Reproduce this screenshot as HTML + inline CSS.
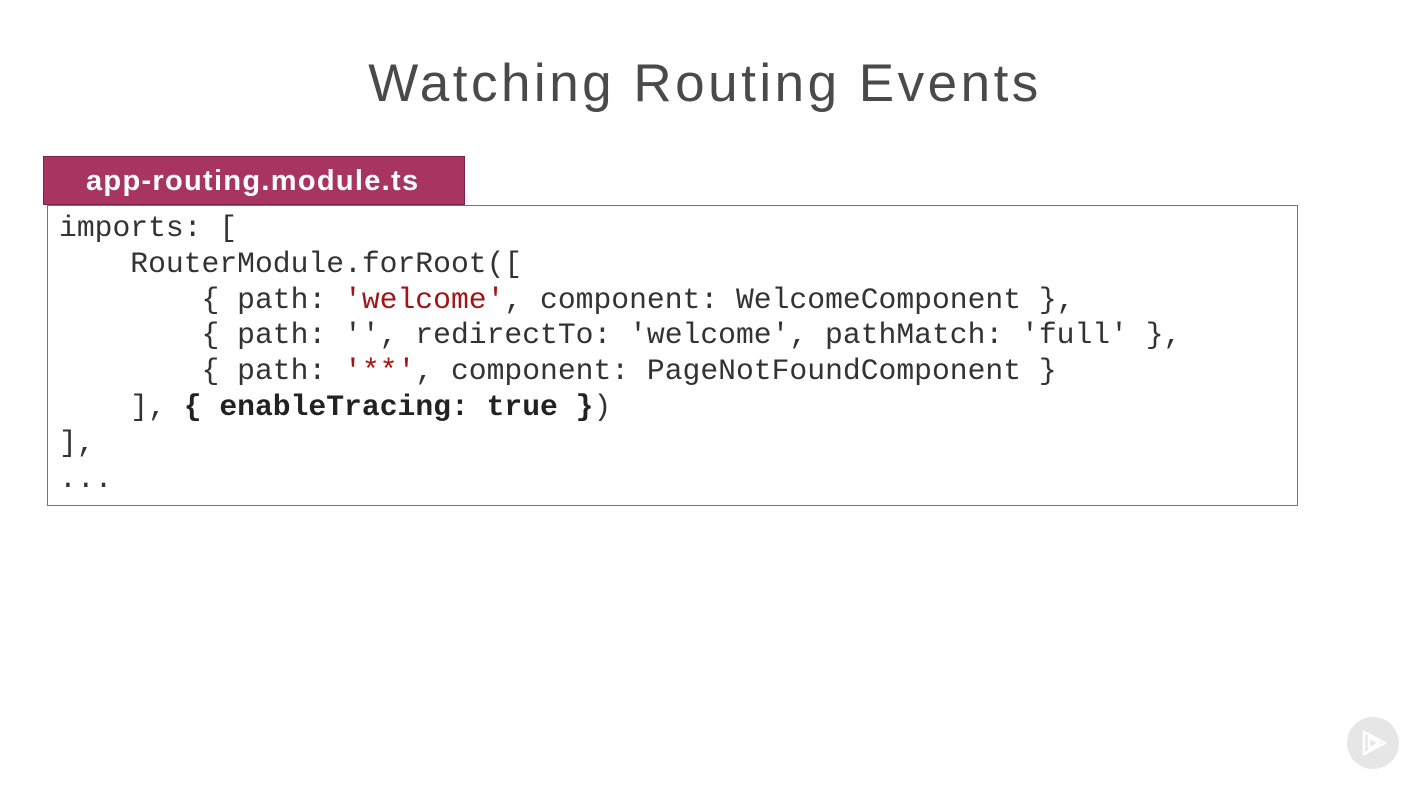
<!DOCTYPE html>
<html><head><style>
body{margin:0;width:1422px;height:786px;background:#fff;position:relative;overflow:hidden;font-family:"Liberation Sans",sans-serif}
.title{position:absolute;top:53px;left:0;width:1410px;text-align:center;font-size:53px;color:#4a4a4a;letter-spacing:3.5px}
.tab{position:absolute;left:43px;top:156px;width:422px;height:49px;background:#a83462;border:1px solid #7d2146;color:#fff;font-size:29px;font-weight:bold;line-height:49px;box-sizing:border-box;padding-left:42px;letter-spacing:1.3px}
.box{position:absolute;left:47px;top:205px;width:1251px;height:301px;border:1px solid #a8587c;box-sizing:border-box}
pre{position:absolute;left:59px;top:211px;margin:0;font-family:"Liberation Mono",monospace;font-size:29.7px;line-height:35.8px;color:#333}
.s{color:#a31515}
b{color:#222}
.play{position:absolute;left:1347px;top:717px;width:52px;height:52px;border-radius:50%;background:#e6e6e6}
</style></head><body>
<div class="title">Watching Routing Events</div>
<div class="box"></div>
<div class="tab">app-routing.module.ts</div>
<pre>imports: [
    RouterModule.forRoot([
        { path: <span class="s">'welcome'</span>, component: WelcomeComponent },
        { path: '', redirectTo: 'welcome', pathMatch: 'full' },
        { path: <span class="s">'**'</span>, component: PageNotFoundComponent }
    ], <b>{ enableTracing: true }</b>)
],
...</pre>
<div class="play"><svg width="52" height="52" viewBox="0 0 52 52"><path d="M17 15 L17 37 L38 26 Z M22 20 L22 32 L32 26 Z" fill="none" stroke="#fff" stroke-width="2.5" stroke-linejoin="round"/></svg></div>
</body></html>
